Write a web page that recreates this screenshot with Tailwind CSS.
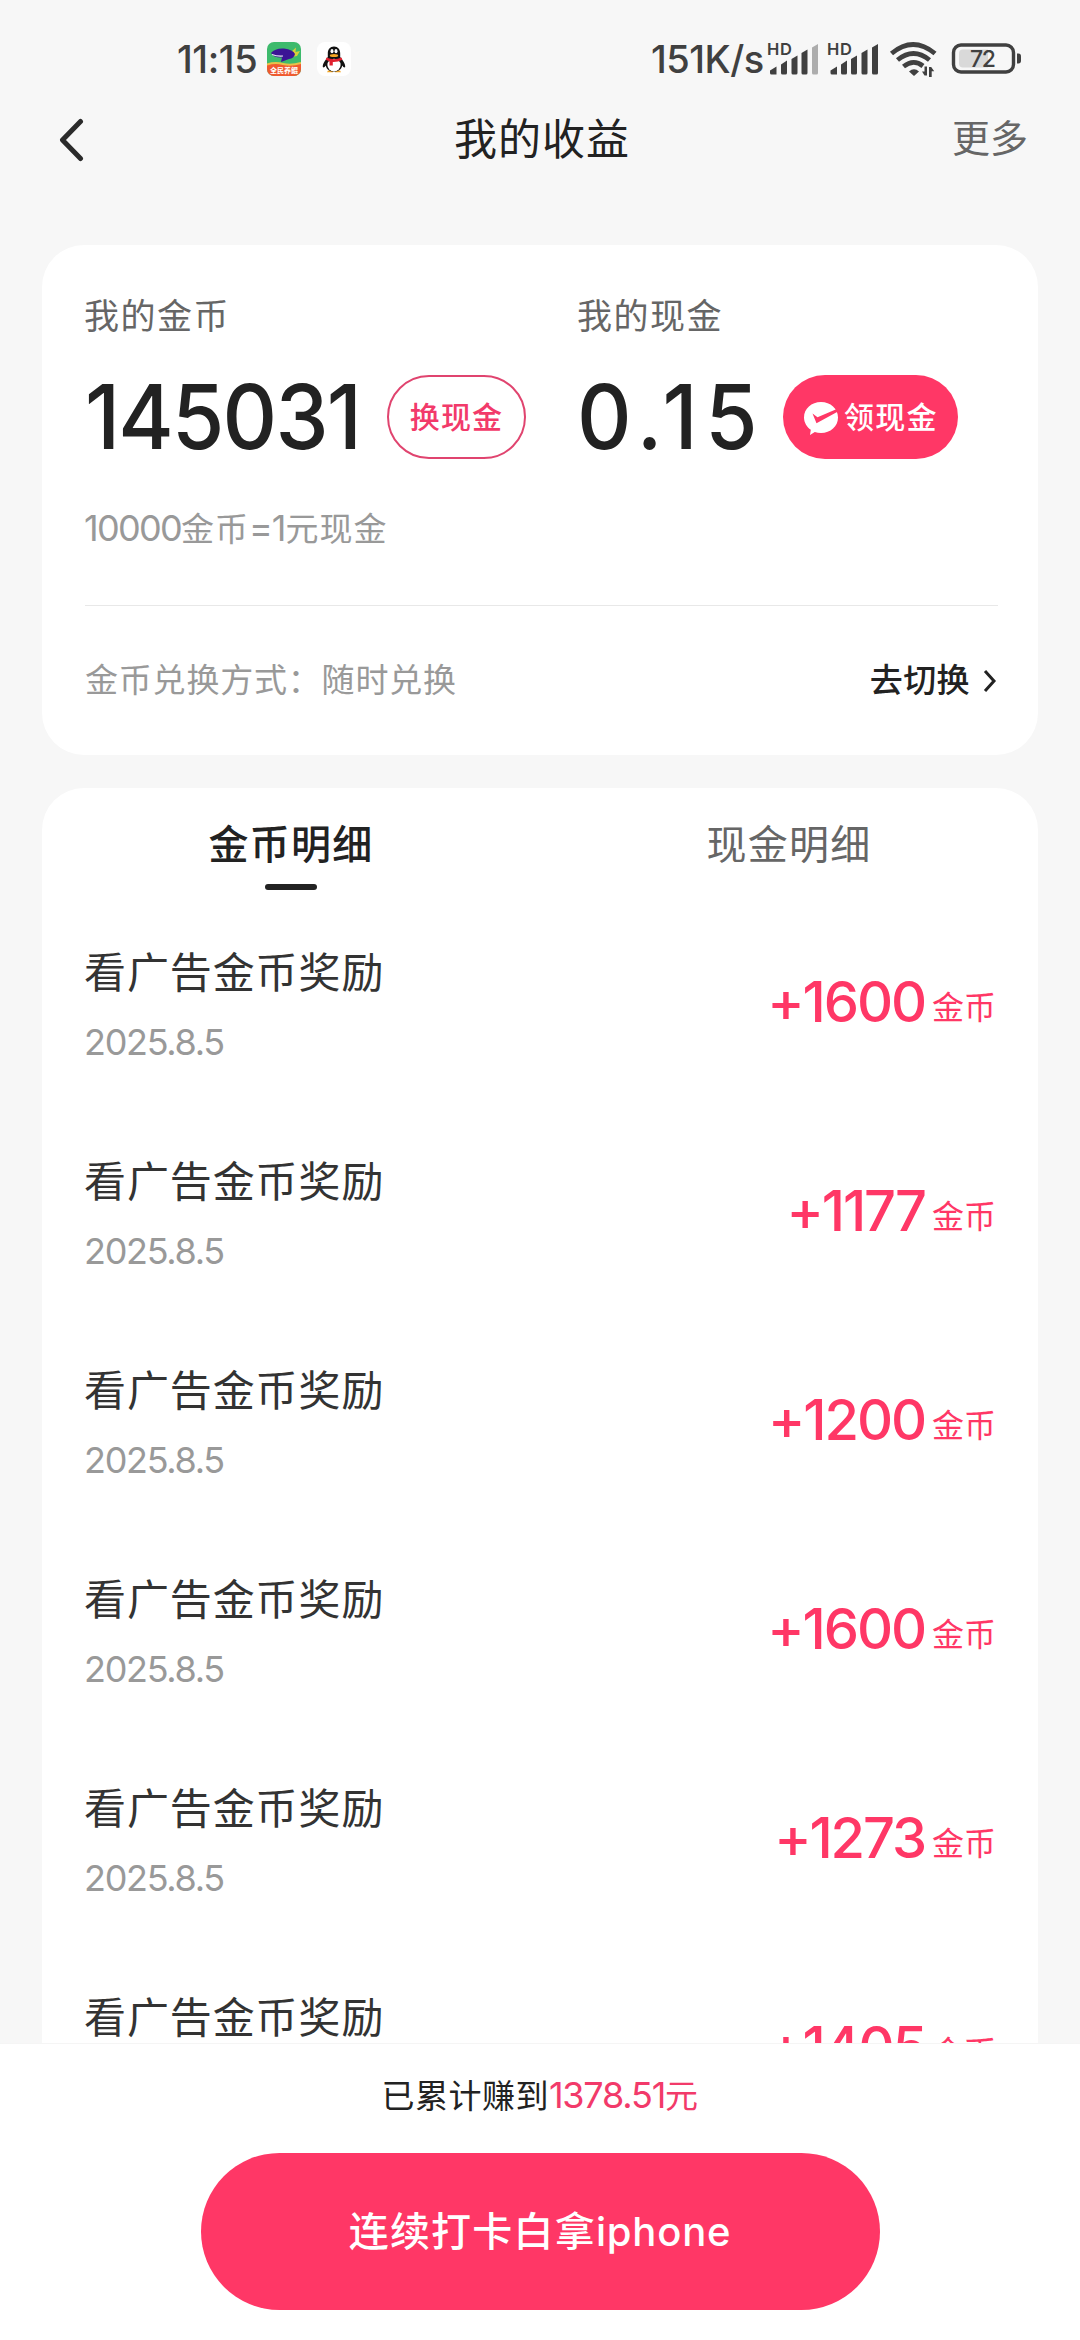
<!DOCTYPE html>
<html lang="zh-CN">
<head>
<meta charset="utf-8">
<title>我的收益</title>
<script src="https://cdn.jsdelivr.net/npm/@tailwindcss/browser@4"></script>
</head>
<body class="w-[1080px] h-[2340px] overflow-hidden bg-[#f7f7f7] flex flex-col text-[#222] whitespace-nowrap font-['Inter','Noto_Sans_CJK_SC',sans-serif]">
  <!-- status bar -->
  <header class="h-[94px] shrink-0 flex items-center pt-[24px] pl-[177px] pr-[58px] text-[#404040]">
    <span class="w-[90px] text-[38px] leading-[40px] font-medium tracking-[-0.4px]">11:15</span>
    <svg class="w-[34px] h-[34px]" viewBox="0 0 34 34">
      <defs><clipPath id="app"><rect width="34" height="34" rx="7"/></clipPath></defs>
      <g clip-path="url(#app)">
        <rect width="34" height="34" fill="#3dba6c"/>
        <path d="M0 22 Q8 20 16 22 T34 21 V34 H0Z" fill="#f0592f"/>
        <path d="M0 22.500 Q8 20 16 22 T34 21" fill="none" stroke="#e9c04a" stroke-width="2"/>
        <path d="M23 11 L29 5.500 L28.500 10 L33 9 L30 14 L24 15Z" fill="#d6cf3a"/>
        <path d="M4 11 Q8 6 17 6.500 Q26 7.500 28 12 Q27 16.500 22 17 L14 20 L15 15.500 Q7 16 4 11Z" fill="#3b1495"/>
        <path d="M5 12.500 Q10 14.500 16 14" fill="none" stroke="#e8e8f4" stroke-width="1.200"/>
        <text x="17" y="31" text-anchor="middle" font-size="7" font-weight="700" fill="#fff" font-family="Noto Sans CJK SC">全民养鲲</text>
      </g>
    </svg>
    <svg class="w-[34px] h-[34px] ml-[16px]" viewBox="0 0 34 34">
      <rect width="34" height="34" rx="8" fill="#fff"/>
      <path d="M11 28.500h5v1.800h-6zM18 28.500h5l1 1.800h-6z" fill="#f5a623"/>
      <path d="M17 4.500c4 0 6.200 3 6.200 7v3.500c2.500 3 5.300 7 5 10-.7 1.200-2-.3-3-1.600-.7 4-4 6-8.200 6s-7.500-2-8.200-6c-1 1.300-2.300 2.800-3 1.600-.3-3 2.500-7 5-10v-3.500c0-4 2.200-7 6.200-7z" fill="#111"/>
      <ellipse cx="17" cy="23" rx="6.600" ry="6.300" fill="#fff"/>
      <ellipse cx="15" cy="9.200" rx="1.500" ry="2.100" fill="#fff"/><ellipse cx="19" cy="9.200" rx="1.500" ry="2.100" fill="#fff"/>
      <ellipse cx="17" cy="13.500" rx="4.200" ry="1.500" fill="#f5a623"/>
      <path d="M9.500 15.500q7.500 3.500 15 0l.8 2.300q-4.500 2.500-9.500 2.300v3.400h-3.300v-4l-3.700-1.700z" fill="#e0202f"/>
    </svg>
    <span class="ml-auto w-[109px] text-[38px] leading-[40px] font-medium tracking-[-0.5px]">151K/s</span>
    <svg class="w-[262px] h-[40px]" viewBox="0 0 262 40" fill="#404040">
      <g font-family="Inter" font-size="16.500" font-weight="600"><text x="7" y="15.500" textLength="25">HD</text><text x="67" y="15.500" textLength="25">HD</text></g>
      <path d="M10 34v-2.500l6.500-4v8h-5q-1.500 0-1.500-1.500z"/>
      <path d="M21 25.500l6-4v12.500q0 1.500-1.500 1.500h-3q-1.500 0-1.500-1.500z"/>
      <path d="M31.500 20l6-3.500v17.500q0 1.500-1.500 1.500h-3q-1.500 0-1.500-1.500z"/>
      <path d="M41.500 14l6-3.500v23.500q0 1.500-1.500 1.500h-3q-1.500 0-1.500-1.500z"/>
      <path d="M52 8.500l6-3.500v29q0 1.500-1.500 1.500h-3q-1.500 0-1.500-1.500z" fill="#adadad"/>
      <path d="M70.500 34v-2.500l6.500-4v8h-5q-1.500 0-1.500-1.500z"/>
      <path d="M81 25.500l6-4v12.500q0 1.500-1.500 1.500h-3q-1.500 0-1.500-1.500z"/>
      <path d="M91 20l6-3.500v17.500q0 1.500-1.500 1.500h-3q-1.500 0-1.500-1.500z"/>
      <path d="M101.500 14l6-3.500v23.500q0 1.500-1.500 1.500h-3q-1.500 0-1.500-1.500z"/>
      <path d="M112 8.500l6-3.500v29q0 1.500-1.500 1.500h-3q-1.500 0-1.500-1.500z"/>
      <g fill="none" stroke="#404040" stroke-width="4.800">
        <path d="M131.500 14.500q21.500-18 43.500 0"/>
        <path d="M137.500 21q16-13 32 0"/>
        <path d="M143.500 27.500q10-8 19.500-.5"/>
      </g>
      <path d="M149 32.500q5-4.500 10 0l-5 4.500z"/>
      <path d="M167 27.500v9h-2.500l-2.500-4h2.500v-5zM169 38v-10h2.200l3 4.300h-2.500v5.700z"/>
      <rect x="193.500" y="6" width="60" height="27" rx="7.500" fill="none" stroke="#404040" stroke-width="3.400"/>
      <path d="M203 10.500h25v18h-25q-4 0-4-4v-10q0-4 4-4z" fill="#d9d9d9"/>
      <path d="M257 14.500h1.500q2.500 0 2.500 3v4q0 3-2.500 3h-1.500z"/>
      <text x="223" y="28" text-anchor="middle" font-family="Inter" font-size="23" font-weight="500" textLength="26">72</text>
    </svg>
  </header>

  <!-- title bar -->
  <nav class="h-[151px] shrink-0 grid grid-cols-3 items-start pl-[56px] pr-[52px]">
    <svg class="ml-[2px] mt-[24px] w-[28px] h-[44px]" viewBox="0 0 28 44" fill="none" stroke="#2b2b2b" stroke-width="5" stroke-linecap="round" stroke-linejoin="round"><path d="M22.500 3.500L4.500 22l18 18.500"/></svg>
    <h1 class="mt-[15px] text-center text-[43px] leading-[60px] tracking-[1px] font-normal">我的收益</h1>
    <span class="mt-[15px] text-right text-[38px] leading-[58px] text-[#666]">更多</span>
  </nav>

  <!-- balance card -->
  <section class="mx-[42px] h-[510px] shrink-0 bg-white rounded-[42px] pl-[43px] pr-[40px] pt-[46px] flex flex-col">
    <div class="grid grid-cols-[492px_1fr]">
      <div>
        <p class="-ml-px text-[35px] leading-[50px] tracking-[1.500px] text-[#666]">我的金币</p>
        <div class="mt-[34px] h-[84px] flex items-center">
          <span class="w-[302px] shrink-0 origin-left scale-x-[0.94] text-[90px] leading-[84px] font-medium tracking-[-1.900px]">145031</span>
          <button class="w-[139px] h-[84px] shrink-0 rounded-full border-2 border-[#e0446f] text-[#f23a6a] text-[30px] tracking-[1.200px] font-medium">换现金</button>
        </div>
        <p class="-ml-px mt-[49px] h-[40px] leading-[40px] text-[#999] text-[33px] tracking-[1px]"><span class="text-[36px] tracking-[-1.700px]">10000</span>金币<span class="text-[36px] tracking-[-1px]">=1</span>元现金</p>
      </div>
      <div>
        <p class="text-[35px] leading-[50px] tracking-[1.500px] text-[#666]">我的现金</p>
        <div class="mt-[34px] h-[84px] flex items-center">
          <span class="w-[206px] shrink-0 origin-left scale-x-[0.94] text-[90px] leading-[84px] font-medium tracking-[8px]">0.15</span>
          <button class="w-[175px] h-[84px] shrink-0 rounded-full bg-[#ff3766] text-white text-[30px] tracking-[1.200px] font-medium flex items-center pl-[20px]">
            <svg class="w-[36px] h-[36px] mr-[5px] mt-[3px]" viewBox="0 0 36 36"><path d="M18 1c9.500 0 17 6.700 17 15.500S27.500 32 18 32c-2.200 0-4.300-.4-6.200-1.100L7 34l.8-5.200C3.800 26 1 21.500 1 16.500 1 7.700 8.500 1 18 1z" fill="#fff"/><path d="M9.500 12.500l5 3.700L35 7.500v3L13.500 22.200z" fill="#ff3766"/></svg>领现金</button>
        </div>
      </div>
    </div>
    <div class="mt-[57px] border-t border-[#e8e8e8] flex-1 flex items-center justify-between text-[33px] tracking-[0.800px]">
      <span class="text-[#999]">金币兑换方式：随时兑换</span>
      <span class="flex items-center font-medium tracking-[0.400px]">去切换<svg class="ml-[12px] w-[16px] h-[24px]" viewBox="0 0 16 24" fill="none" stroke="#222" stroke-width="3"><path d="M3 2l9 10-9 10"/></svg></span>
    </div>
  </section>

  <!-- records -->
  <section class="mt-[33px] mx-[42px] h-[1255px] shrink-0 overflow-hidden bg-white rounded-t-[42px]">
    <div class="h-[111px] pt-[32px] grid grid-cols-2 justify-items-center text-[40px] leading-[50px] tracking-[1.200px]">
      <div class="flex flex-col items-center font-medium">金币明细<i class="mt-[14px] w-[52px] h-[6px] rounded-full bg-[#222]"></i></div>
      <div class="text-[#666]">现金明细</div>
    </div>
    <ul class="pl-[42px] pr-[42px]">
      <li class="h-[209px] flex items-center justify-between">
        <div><p class="text-[42px] leading-[56px] tracking-[0.900px] text-[#333]">看广告金币奖励</p><p class="mt-[21px] text-[36px] leading-[40px] tracking-[-1.300px] text-[#999]">2025.8.5</p></div>
        <p class="text-[#ff3766] leading-[60px] flex items-baseline"><span class="translate-y-[3px] text-[56px] font-medium tracking-[-2.100px]">+1600</span><span class="ml-[7px] text-[32px]">金币</span></p>
      </li>
      <li class="h-[209px] flex items-center justify-between">
        <div><p class="text-[42px] leading-[56px] tracking-[0.900px] text-[#333]">看广告金币奖励</p><p class="mt-[21px] text-[36px] leading-[40px] tracking-[-1.300px] text-[#999]">2025.8.5</p></div>
        <p class="text-[#ff3766] leading-[60px] flex items-baseline"><span class="translate-y-[3px] text-[56px] font-medium tracking-[-2.100px]">+1177</span><span class="ml-[7px] text-[32px]">金币</span></p>
      </li>
      <li class="h-[209px] flex items-center justify-between">
        <div><p class="text-[42px] leading-[56px] tracking-[0.900px] text-[#333]">看广告金币奖励</p><p class="mt-[21px] text-[36px] leading-[40px] tracking-[-1.300px] text-[#999]">2025.8.5</p></div>
        <p class="text-[#ff3766] leading-[60px] flex items-baseline"><span class="translate-y-[3px] text-[56px] font-medium tracking-[-2.100px]">+1200</span><span class="ml-[7px] text-[32px]">金币</span></p>
      </li>
      <li class="h-[209px] flex items-center justify-between">
        <div><p class="text-[42px] leading-[56px] tracking-[0.900px] text-[#333]">看广告金币奖励</p><p class="mt-[21px] text-[36px] leading-[40px] tracking-[-1.300px] text-[#999]">2025.8.5</p></div>
        <p class="text-[#ff3766] leading-[60px] flex items-baseline"><span class="translate-y-[3px] text-[56px] font-medium tracking-[-2.100px]">+1600</span><span class="ml-[7px] text-[32px]">金币</span></p>
      </li>
      <li class="h-[209px] flex items-center justify-between">
        <div><p class="text-[42px] leading-[56px] tracking-[0.900px] text-[#333]">看广告金币奖励</p><p class="mt-[21px] text-[36px] leading-[40px] tracking-[-1.300px] text-[#999]">2025.8.5</p></div>
        <p class="text-[#ff3766] leading-[60px] flex items-baseline"><span class="translate-y-[3px] text-[56px] font-medium tracking-[-2.100px]">+1273</span><span class="ml-[7px] text-[32px]">金币</span></p>
      </li>
      <li class="h-[209px] flex items-center justify-between">
        <div><p class="text-[42px] leading-[56px] tracking-[0.900px] text-[#333]">看广告金币奖励</p><p class="mt-[21px] text-[36px] leading-[40px] tracking-[-1.300px] text-[#999]">2025.8.5</p></div>
        <p class="text-[#ff3766] leading-[60px] flex items-baseline"><span class="translate-y-[3px] text-[56px] font-medium tracking-[-2.100px]">+1405</span><span class="ml-[7px] text-[32px]">金币</span></p>
      </li>
    </ul>
  </section>

  <!-- bottom bar -->
  <footer class="flex-1 bg-white border-t border-[#f5f5f5] flex flex-col items-center pt-[26px]">
    <p class="h-[50px] leading-[50px] text-[33px] tracking-[0.500px]">已累计赚到<span class="text-[#f23a6a]"><span class="text-[36px] tracking-[-1.200px]">1378.51</span>元</span></p>
    <button class="mt-[33px] w-[679px] h-[157px] rounded-full bg-[#ff3766] text-white font-medium text-[40px] tracking-[1.200px]">连续打卡白拿<span class="tracking-[0.800px]">iphone</span></button>
  </footer>
</body>
</html>
